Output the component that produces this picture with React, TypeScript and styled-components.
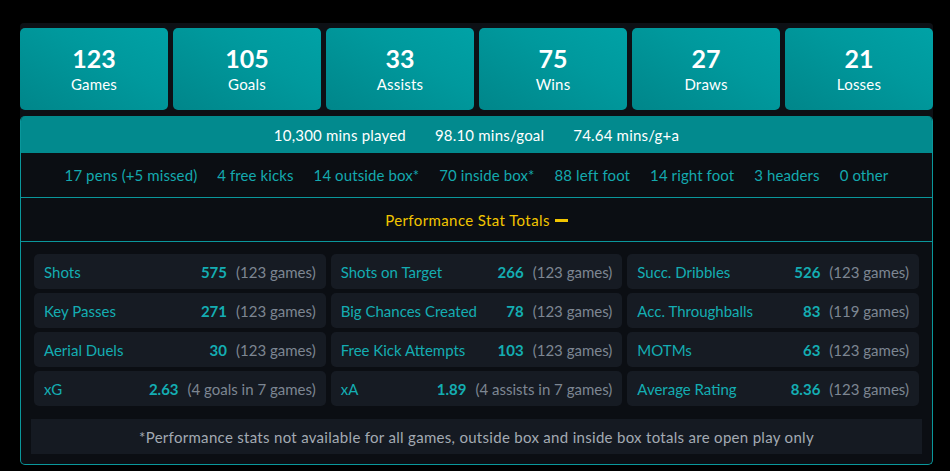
import React from "react";
import styled, { createGlobalStyle } from "styled-components";

const Global = createGlobalStyle`
  html, body { margin: 0; padding: 0; background: #000; }
  body { font-family: "Lato", "Open Sans", sans-serif; }
`;

const Page = styled.div`
  padding: 23px 17px 7px 20px;
`;

const Panel = styled.div`
  width: 913px;
  background: #0d1015;
  padding-top: 5px;
  border-radius: 4px 4px 6px 6px;
`;

const Cards = styled.div`
  display: grid;
  grid-template-columns: repeat(6, 1fr);
  gap: 5px;
  margin-bottom: 6px;
`;

const Card = styled.div`
  height: 82px;
  border-radius: 5px;
  background: linear-gradient(30deg, #00868a 0%, #00999d 60%, #00a2a6 100%);
  display: flex;
  flex-direction: column;
  align-items: center;
  justify-content: center;
  color: #fff;
`;

const CardNum = styled.div`
  font-size: 25px;
  font-weight: 700;
  line-height: 28px;
`;

const CardLabel = styled.div`
  font-size: 15px;
  line-height: 20px;
  margin-top: 2px;
  letter-spacing: 0.2px;
`;

const Section = styled.div`
  border: 1px solid #0a979b;
  border-top: none;
  border-radius: 5px;
  overflow: hidden;
  background: #0b0e13;
`;

const TopBar = styled.div`
  height: 37px;
  background: #028a8e;
  display: flex;
  justify-content: center;
  align-items: center;
  gap: 29px;
  color: #fff;
  font-size: 15px;
  letter-spacing: 0.2px;
`;

const InfoRow = styled.div`
  height: 44px;
  display: flex;
  justify-content: center;
  align-items: center;
  gap: 20px;
  color: #14a9ae;
  font-size: 15px;
  letter-spacing: 0.1px;
  border-bottom: 1px solid #0a979b;
`;

const TitleRow = styled.div`
  height: 43px;
  display: flex;
  justify-content: center;
  align-items: center;
  gap: 5px;
  color: #f2c500;
  font-size: 15px;
  letter-spacing: 0.4px;
  border-bottom: 1px solid #0a979b;
`;

const Dash = styled.span`
  display: inline-block;
  width: 13px;
  height: 3px;
  background: #f2c500;
  margin-top: 2px;
`;

const Body = styled.div`
  padding: 12px 10px 10px;
`;

const Grid = styled.div`
  display: grid;
  grid-template-columns: repeat(3, 1fr);
  gap: 4px 5px;
  padding: 0 3px;
  margin-bottom: 13px;
`;

const Stat = styled.div`
  height: 35px;
  background: #161b23;
  border-radius: 5px;
  display: flex;
  align-items: center;
  padding: 0 10px;
  font-size: 15px;
`;

const StatLabel = styled.span`
  color: #14adb2;
  flex: 1;
`;

const StatValue = styled.span`
  color: #14adb2;
  font-weight: 700;
  margin-right: 9px;
`;

const StatNote = styled.span`
  color: #7d8692;
`;

const Footnote = styled.div`
  height: 35px;
  background: #151a22;
  display: flex;
  align-items: center;
  justify-content: center;
  color: #a3aab3;
  font-size: 15px;
  letter-spacing: 0.3px;
`;

const cards = [
  ["123", "Games"],
  ["105", "Goals"],
  ["33", "Assists"],
  ["75", "Wins"],
  ["27", "Draws"],
  ["21", "Losses"],
];

const info = [
  "17 pens (+5 missed)",
  "4 free kicks",
  "14 outside box*",
  "70 inside box*",
  "88 left foot",
  "14 right foot",
  "3 headers",
  "0 other",
];

const stats: [string, string, string][] = [
  ["Shots", "575", "(123 games)"],
  ["Shots on Target", "266", "(123 games)"],
  ["Succ. Dribbles", "526", "(123 games)"],
  ["Key Passes", "271", "(123 games)"],
  ["Big Chances Created", "78", "(123 games)"],
  ["Acc. Throughballs", "83", "(119 games)"],
  ["Aerial Duels", "30", "(123 games)"],
  ["Free Kick Attempts", "103", "(123 games)"],
  ["MOTMs", "63", "(123 games)"],
  ["xG", "2.63", "(4 goals in 7 games)"],
  ["xA", "1.89", "(4 assists in 7 games)"],
  ["Average Rating", "8.36", "(123 games)"],
];

export default function App() {
  return (
    <>
      <Global />
      <Page>
        <Panel>
          <Cards>
            {cards.map(([n, l]) => (
              <Card key={l}>
                <CardNum>{n}</CardNum>
                <CardLabel>{l}</CardLabel>
              </Card>
            ))}
          </Cards>
          <Section>
            <TopBar>
              <span>10,300 mins played</span>
              <span>98.10 mins/goal</span>
              <span>74.64 mins/g+a</span>
            </TopBar>
            <InfoRow>
              {info.map((t) => (
                <span key={t}>{t}</span>
              ))}
            </InfoRow>
            <TitleRow>
              <span>Performance Stat Totals</span>
              <Dash />
            </TitleRow>
            <Body>
              <Grid>
                {stats.map(([l, v, n]) => (
                  <Stat key={l}>
                    <StatLabel>{l}</StatLabel>
                    <StatValue>{v}</StatValue>
                    <StatNote>{n}</StatNote>
                  </Stat>
                ))}
              </Grid>
              <Footnote>
                *Performance stats not available for all games, outside box and inside box totals are open play only
              </Footnote>
            </Body>
          </Section>
        </Panel>
      </Page>
    </>
  );
}
